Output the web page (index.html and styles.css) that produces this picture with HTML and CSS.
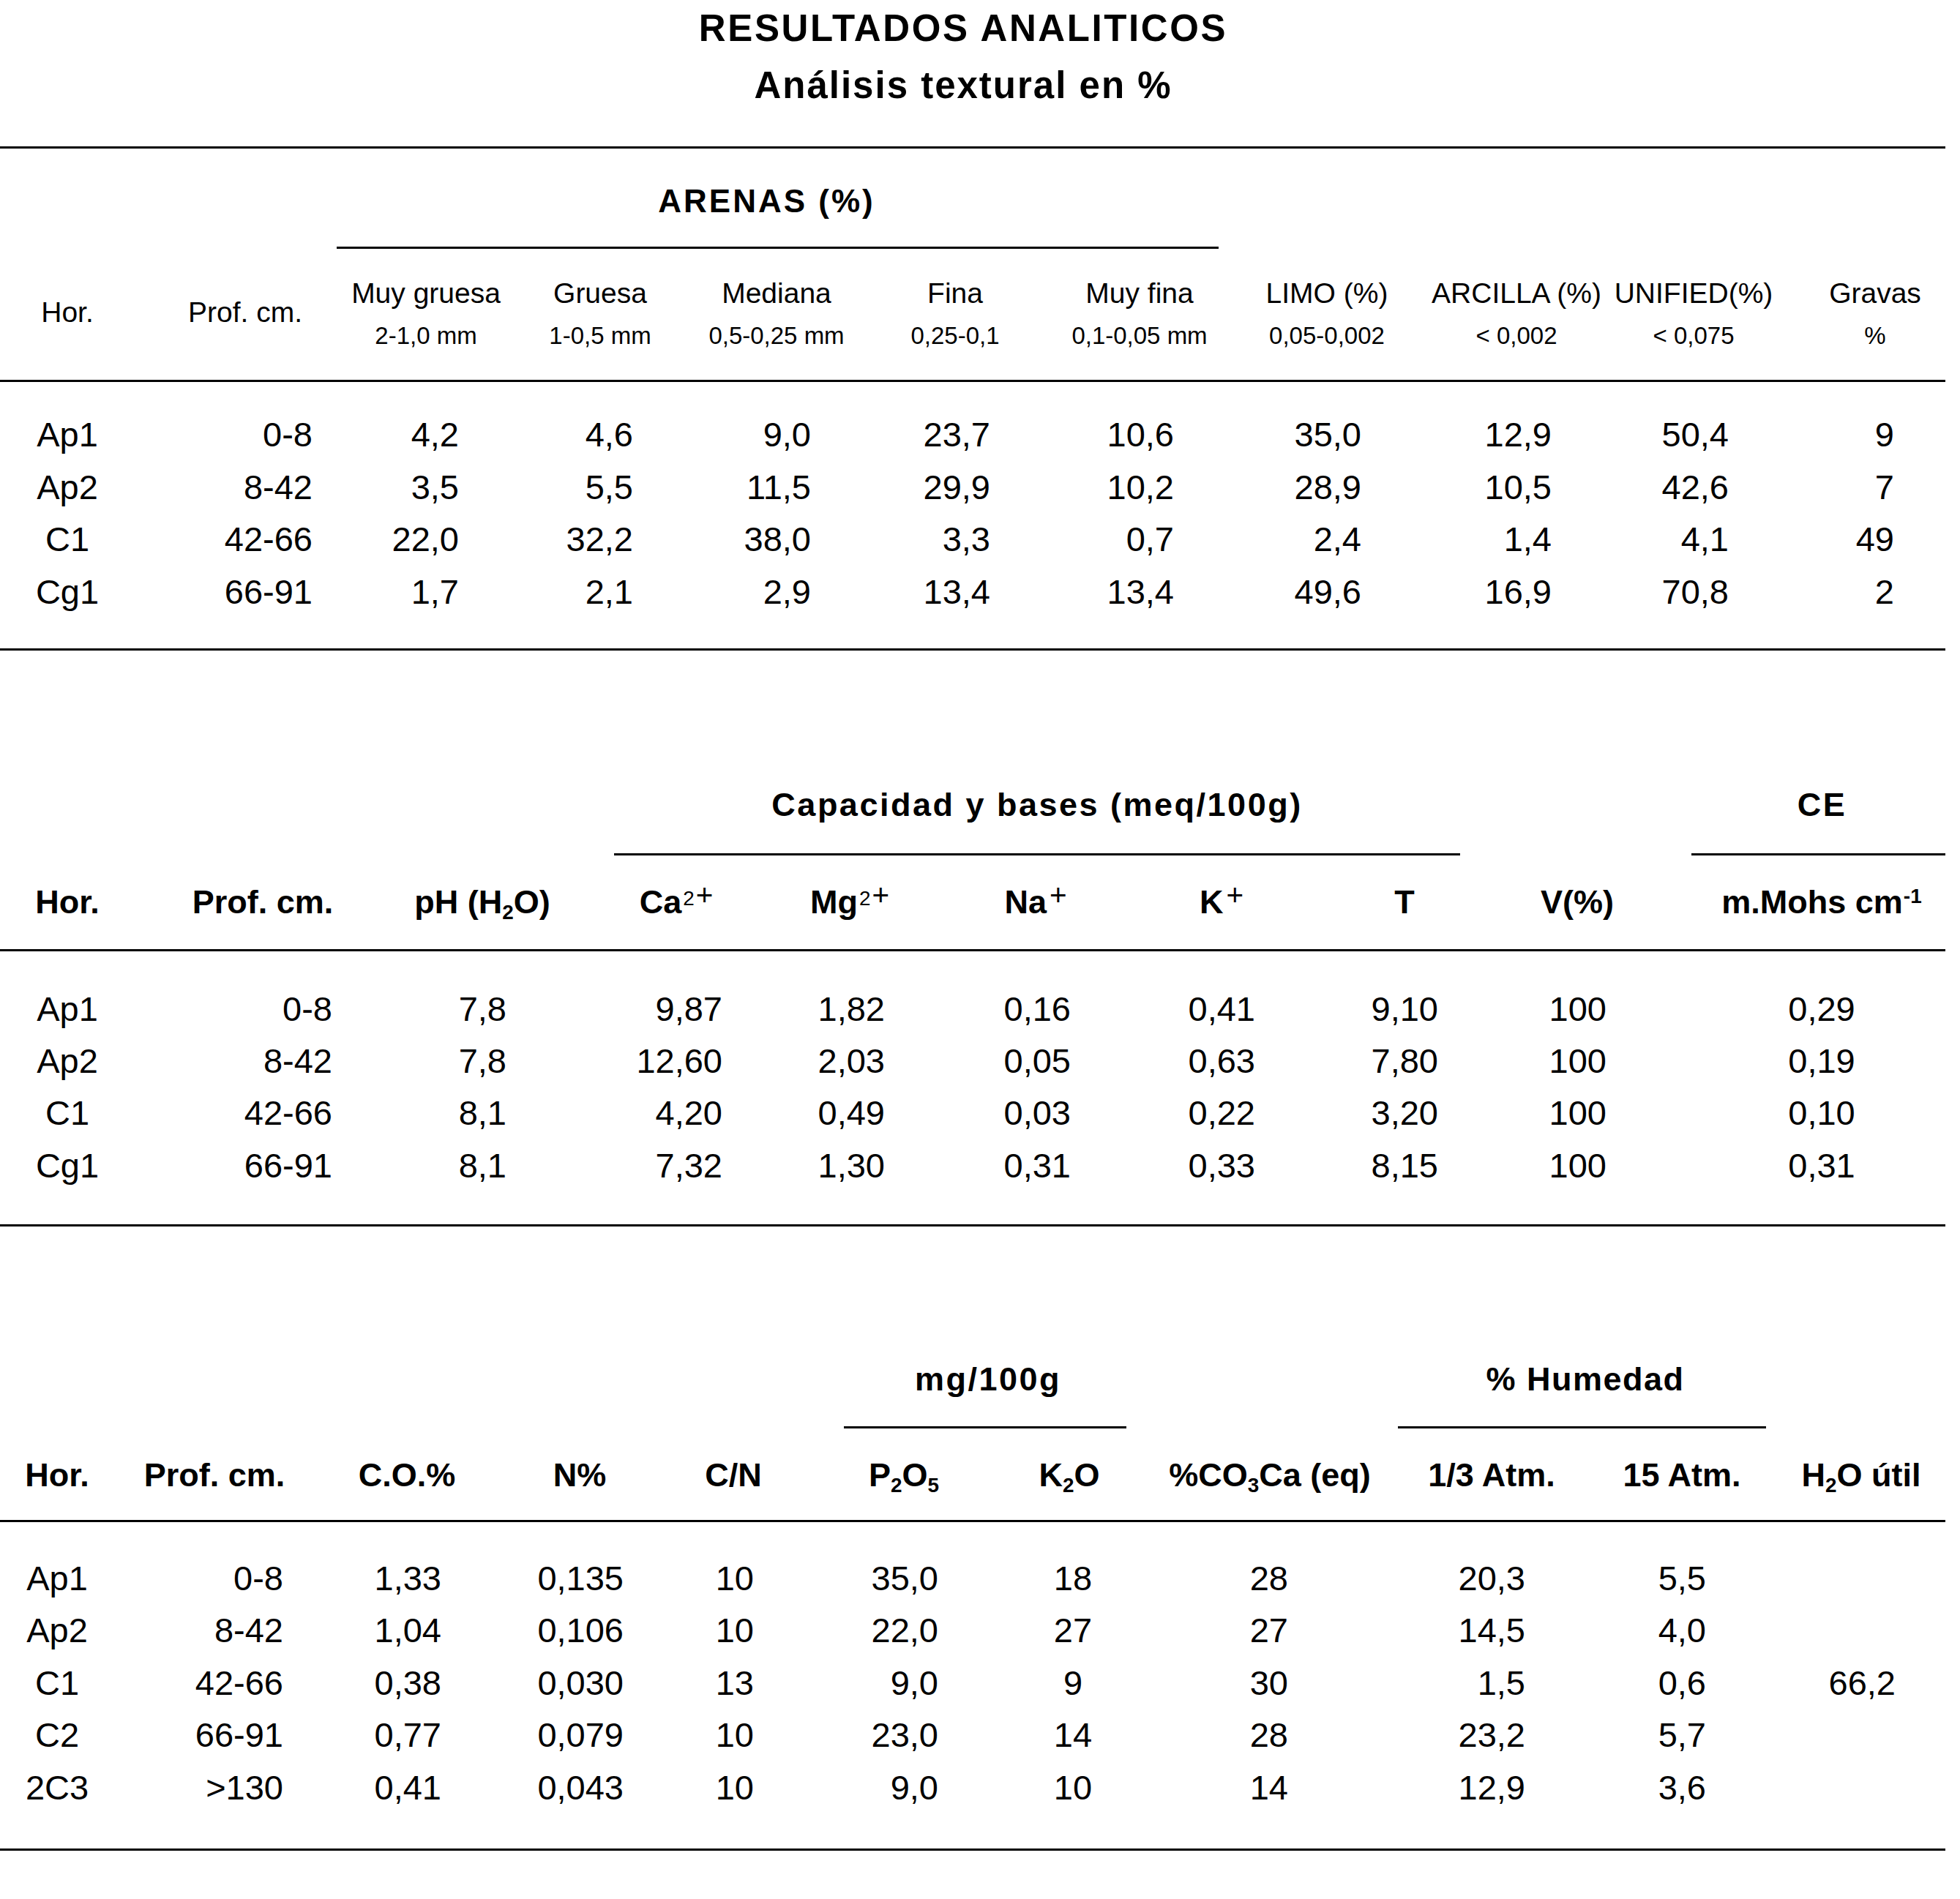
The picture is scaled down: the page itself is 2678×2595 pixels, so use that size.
FILE: index.html
```html
<!DOCTYPE html>
<html lang="es">
<head>
<meta charset="utf-8">
<title>Resultados analíticos</title>
<link rel="stylesheet" href="styles.css">
</head>
<body>
<main class="page">
  <header class="titles">
    <h1>RESULTADOS ANALITICOS</h1>
    <h2>Análisis textural en %</h2>
  </header>

  <section class="tbl t1">
    <div class="grp"><div class="g1">ARENAS (%)</div></div>
    <div class="head cols">
      <div class="one">Hor.</div>
      <div class="one">Prof. cm.</div>
      <div><span>Muy gruesa</span><span class="rng">2-1,0 mm</span></div>
      <div><span>Gruesa</span><span class="rng">1-0,5 mm</span></div>
      <div><span>Mediana</span><span class="rng">0,5-0,25 mm</span></div>
      <div><span>Fina</span><span class="rng">0,25-0,1</span></div>
      <div><span>Muy fina</span><span class="rng">0,1-0,05 mm</span></div>
      <div><span>LIMO (%)</span><span class="rng">0,05-0,002</span></div>
      <div><span>ARCILLA (%)</span><span class="rng">&lt; 0,002</span></div>
      <div><span>UNIFIED(%)</span><span class="rng">&lt; 0,075</span></div>
      <div><span>Gravas</span><span class="rng">%</span></div>
    </div>
    <div class="body">
      <div class="row cols"><span>Ap1</span><span>0-8</span><span>4,2</span><span>4,6</span><span>9,0</span><span>23,7</span><span>10,6</span><span>35,0</span><span>12,9</span><span>50,4</span><span>9</span></div>
      <div class="row cols"><span>Ap2</span><span>8-42</span><span>3,5</span><span>5,5</span><span>11,5</span><span>29,9</span><span>10,2</span><span>28,9</span><span>10,5</span><span>42,6</span><span>7</span></div>
      <div class="row cols"><span>C1</span><span>42-66</span><span>22,0</span><span>32,2</span><span>38,0</span><span>3,3</span><span>0,7</span><span>2,4</span><span>1,4</span><span>4,1</span><span>49</span></div>
      <div class="row cols"><span>Cg1</span><span>66-91</span><span>1,7</span><span>2,1</span><span>2,9</span><span>13,4</span><span>13,4</span><span>49,6</span><span>16,9</span><span>70,8</span><span>2</span></div>
    </div>
  </section>

  <section class="tbl t2">
    <div class="grp"><div class="g1">Capacidad y bases (meq/100g)</div><div class="g2">CE</div></div>
    <div class="head cols">
      <div>Hor.</div>
      <div>Prof. cm.</div>
      <div><span>pH (H<sub>2</sub>O)</span></div>
      <div><span>Ca<sup>2<span class="pl">+</span></sup></span></div>
      <div><span>Mg<sup>2<span class="pl">+</span></sup></span></div>
      <div><span>Na<sup><span class="pl">+</span></sup></span></div>
      <div><span>K<sup><span class="pl">+</span></sup></span></div>
      <div>T</div>
      <div>V(%)</div>
      <div><span>m.Mohs cm<sup class="neg">-1</sup></span></div>
    </div>
    <div class="body">
      <div class="row cols"><span>Ap1</span><span>0-8</span><span>7,8</span><span>9,87</span><span>1,82</span><span>0,16</span><span>0,41</span><span>9,10</span><span>100</span><span>0,29</span></div>
      <div class="row cols"><span>Ap2</span><span>8-42</span><span>7,8</span><span>12,60</span><span>2,03</span><span>0,05</span><span>0,63</span><span>7,80</span><span>100</span><span>0,19</span></div>
      <div class="row cols"><span>C1</span><span>42-66</span><span>8,1</span><span>4,20</span><span>0,49</span><span>0,03</span><span>0,22</span><span>3,20</span><span>100</span><span>0,10</span></div>
      <div class="row cols"><span>Cg1</span><span>66-91</span><span>8,1</span><span>7,32</span><span>1,30</span><span>0,31</span><span>0,33</span><span>8,15</span><span>100</span><span>0,31</span></div>
    </div>
  </section>

  <section class="tbl t3">
    <div class="grp"><div class="g1">mg/100g</div><div class="g2">% Humedad</div></div>
    <div class="head cols">
      <div>Hor.</div>
      <div>Prof. cm.</div>
      <div>C.O.%</div>
      <div>N%</div>
      <div>C/N</div>
      <div><span>P<sub>2</sub>O<sub>5</sub></span></div>
      <div><span>K<sub>2</sub>O</span></div>
      <div><span>%CO<sub>3</sub>Ca (eq)</span></div>
      <div>1/3 Atm.</div>
      <div>15 Atm.</div>
      <div><span>H<sub>2</sub>O útil</span></div>
    </div>
    <div class="body">
      <div class="row cols"><span>Ap1</span><span>0-8</span><span>1,33</span><span>0,135</span><span>10</span><span>35,0</span><span>18</span><span>28</span><span>20,3</span><span>5,5</span><span></span></div>
      <div class="row cols"><span>Ap2</span><span>8-42</span><span>1,04</span><span>0,106</span><span>10</span><span>22,0</span><span>27</span><span>27</span><span>14,5</span><span>4,0</span><span></span></div>
      <div class="row cols"><span>C1</span><span>42-66</span><span>0,38</span><span>0,030</span><span>13</span><span>9,0</span><span>9</span><span>30</span><span>1,5</span><span>0,6</span><span>66,2</span></div>
      <div class="row cols"><span>C2</span><span>66-91</span><span>0,77</span><span>0,079</span><span>10</span><span>23,0</span><span>14</span><span>28</span><span>23,2</span><span>5,7</span><span></span></div>
      <div class="row cols"><span>2C3</span><span>&gt;130</span><span>0,41</span><span>0,043</span><span>10</span><span>9,0</span><span>10</span><span>14</span><span>12,9</span><span>3,6</span><span></span></div>
    </div>
  </section>
</main>
</body>
</html>
```

FILE: styles.css
```css
* {
  box-sizing: border-box;
  margin: 0;
  padding: 0;
}

body {
  margin: 0;
  background: #fff;
  color: #000;
  font-family: "Liberation Sans", Arial, sans-serif;
}

.page {
  width: 2658px;
}

/* ---------- titles ---------- */
.titles {
  padding-right: 26px;
  text-align: center;
  font-weight: bold;
  font-size: 51px;
  line-height: 78px;
}
.titles h1 {
  font-size: 51px;
  letter-spacing: 2.6px;
}
.titles h2 {
  font-size: 51px;
  letter-spacing: 2px;
}

/* ---------- tables ---------- */
.tbl {
  border-bottom: 3px solid #000;
}
.t1 {
  margin-top: 44px;
  border-top: 3px solid #000;
}
.t2 {
  margin-top: 147px;
}
.t3 {
  margin-top: 145px;
}

/* group header row */
.grp {
  display: grid;
}
.grp > div {
  text-align: center;
  font-weight: bold;
  font-size: 45px;
  line-height: 60px;
  letter-spacing: 2.5px;
  white-space: nowrap;
  border-bottom: 3px solid #000;
}
.t1 .grp {
  grid-template-columns: 460px 1205px;
}
.t1 .grp > .g1 {
  grid-column: 2;
  font-size: 44px;
  letter-spacing: 3px;
  padding: 41.8px 30px 32.2px 0;
}
.t2 .grp {
  grid-template-columns: 839px 1156px 316px 347px;
}
.t2 .grp > div {
  padding: 34.4px 0 35.6px;
}
.t2 .grp > .g1 { grid-column: 2; }
.t2 .grp > .g2 { grid-column: 4; padding-left: 10px; }

.t3 .grp {
  grid-template-columns: 1153px 386px 371px 503px;
}
.t3 .grp > div {
  padding: 34.4px 0 33.6px;
}
.t3 .grp > .g1 { grid-column: 2; padding-left: 8px; }
.t3 .grp > .g2 { grid-column: 4; padding-left: 9px; letter-spacing: 1.5px; }

/* column templates */
.cols {
  display: grid;
}
.t1 .cols {
  grid-template-columns: 184px 302px 192px 284px 198px 290px 214px 298px 220px 264px 232px;
}
.t2 .cols {
  grid-template-columns: 184px 350px 250px 280px 194px 314px 194px 306px 166px 440px;
}
.t3 .cols {
  grid-template-columns: 156px 274px 252px 220px 200px 266px 186px 362px 244px 276px 214px;
}

/* column headers */
.head {
  border-bottom: 3px solid #000;
  font-size: 45px;
  font-weight: bold;
  line-height: 60px;
  align-items: start;
}
.head > div {
  display: flex;
  flex-direction: column;
  align-items: center;
  white-space: nowrap;
}
.t1 .head {
  height: 182px;
  font-size: 39px;
  font-weight: normal;
  line-height: 50px;
}
.t1 .head > div {
  padding-top: 36.5px;
}
.t1 .head > .one {
  padding-top: 62.5px;
}
.t1 .head .rng {
  font-size: 33px;
  line-height: 66px;
}
.t2 .head {
  height: 131px;
  padding-top: 34.4px;
}
.t3 .head {
  height: 128px;
  padding-top: 34.4px;
}

sub {
  font-size: 0.62em;
  vertical-align: -0.3em;
  line-height: 0;
}
sup {
  font-size: 0.62em;
  font-weight: normal;
  vertical-align: 0.42em;
  line-height: 0;
  margin-left: 2px;
}
sup .pl {
  font-size: 1.45em;
  margin-left: 2px;
}
sup.neg {
  font-weight: bold;
  vertical-align: 0.5em;
  margin-left: 1px;
}

/* data rows */
.body {
  font-size: 47px;
}
.t1 .body {
  padding: 36px 0 41.2px;
  line-height: 71.7px;
}
.t2 .body {
  padding: 43.1px 0 45.1px;
  line-height: 71.2px;
}
.t3 .body {
  padding: 41px 0 47.5px;
  line-height: 71.5px;
}

.row > span {
  display: flex;
  justify-content: flex-end;
  white-space: nowrap;
  padding-right: calc(50% - var(--o, 47px));
}
.row > span:first-child {
  justify-content: center;
  padding-right: 0;
}

/* table 1 data offsets (right edge relative to column centre) */
.t1 .row > :nth-child(2) { --o: 92px; }
.t1 .row > :nth-child(3) { --o: 45px; }
.t1 .row > :nth-child(4) { --o: 45px; }
.t1 .row > :nth-child(5) { --o: 47px; }
.t1 .row > :nth-child(6) { --o: 48px; }
.t1 .row > :nth-child(7) { --o: 47px; }
.t1 .row > :nth-child(8) { --o: 47px; }
.t1 .row > :nth-child(9) { --o: 48px; }
.t1 .row > :nth-child(10) { --o: 48px; }
.t1 .row > :nth-child(11) { --o: 26px; }

/* table 2 */
.t2 .row > :nth-child(2) { --o: 95px; }
.t2 .row > :nth-child(3) { --o: 33px; }
.t2 .row > :nth-child(4) { --o: 63px; }
.t2 .row > :nth-child(5) { --o: 48px; }
.t2 .row > :nth-child(6) { --o: 48px; }
.t2 .row > :nth-child(7) { --o: 46px; }
.t2 .row > :nth-child(8) { --o: 46px; }
.t2 .row > :nth-child(9) { --o: 40px; }
.t2 .cols > :nth-child(10) { padding-left: 62px; }
.t2 .row > :nth-child(10) {
  justify-content: center;
  padding-right: 0;
}

/* table 3 */
.t3 .row > :nth-child(2) { --o: 94px; }
.t3 .row > :nth-child(3) { --o: 47px; }
.t3 .row > :nth-child(4) { --o: 60px; }
.t3 .row > :nth-child(5) { --o: 28px; }
.t3 .row > :nth-child(6) { --o: 47px; }
.t3 .row > :nth-child(7) {
  justify-content: center;
  padding-right: 0;
  padding-left: 10px;
}
.t3 .row > :nth-child(8) { --o: 25px; }
.t3 .row > :nth-child(9) { --o: 46px; }
.t3 .row > :nth-child(10) { --o: 33px; }
.t3 .row > :nth-child(11) { --o: 47px; }
```
